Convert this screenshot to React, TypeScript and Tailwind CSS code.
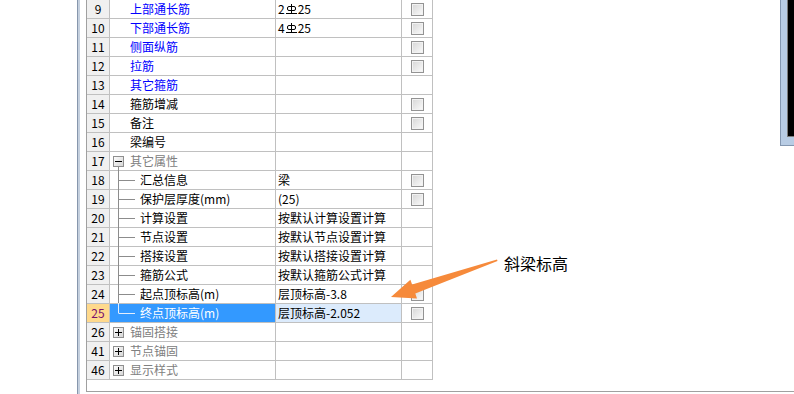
import React from 'react'

type Kind = 'plain' | 'open' | 'child' | 'last' | 'closed'

type Row = {
  n: string
  name: string
  kind: Kind
  blue?: boolean
  value?: React.ReactNode
  check?: boolean
  selected?: boolean
}

// rebar grade symbol (HRB400)
function Rebar() {
  return (
    <svg width="11" height="12" viewBox="0 0 11 12" className="mx-px inline-block">
      <rect x="1.5" y="3.5" width="8" height="4" rx="1.5" fill="none" stroke="#000" />
      <path d="M5.5 1v9.5M0 10.5h11" stroke="#000" />
    </svg>
  )
}

const rows: Row[] = [
  { n: '9', name: '上部通长筋', kind: 'plain', blue: true, value: <>2<Rebar />25</>, check: true },
  { n: '10', name: '下部通长筋', kind: 'plain', blue: true, value: <>4<Rebar />25</>, check: true },
  { n: '11', name: '侧面纵筋', kind: 'plain', blue: true, check: true },
  { n: '12', name: '拉筋', kind: 'plain', blue: true, check: true },
  { n: '13', name: '其它箍筋', kind: 'plain', blue: true },
  { n: '14', name: '箍筋增减', kind: 'plain', check: true },
  { n: '15', name: '备注', kind: 'plain', check: true },
  { n: '16', name: '梁编号', kind: 'plain' },
  { n: '17', name: '其它属性', kind: 'open' },
  { n: '18', name: '汇总信息', kind: 'child', value: '梁', check: true },
  { n: '19', name: '保护层厚度(mm)', kind: 'child', value: '(25)', check: true },
  { n: '20', name: '计算设置', kind: 'child', value: '按默认计算设置计算' },
  { n: '21', name: '节点设置', kind: 'child', value: '按默认节点设置计算' },
  { n: '22', name: '搭接设置', kind: 'child', value: '按默认搭接设置计算' },
  { n: '23', name: '箍筋公式', kind: 'child', value: '按默认箍筋公式计算' },
  { n: '24', name: '起点顶标高(m)', kind: 'child', value: '层顶标高-3.8', check: true },
  { n: '25', name: '终点顶标高(m)', kind: 'last', value: '层顶标高-2.052', check: true, selected: true },
  { n: '26', name: '锚固搭接', kind: 'closed' },
  { n: '41', name: '节点锚固', kind: 'closed' },
  { n: '46', name: '显示样式', kind: 'closed' },
]

function Tree({ kind, light }: { kind: Kind; light?: boolean }) {
  const c = light ? '#e4eefc' : '#8c8c8c'
  if (kind === 'child' || kind === 'last') {
    return (
      <svg width="30" height="18" className="shrink-0 overflow-visible">
        <path d={kind === 'child' ? 'M8.5 -1V18' : 'M8.5 -1V9.5'} stroke={c} />
        <path d="M9 9.5H25" stroke={c} />
      </svg>
    )
  }
  return (
    <svg width="20" height="18" className="shrink-0 overflow-visible">
      <defs>
        <linearGradient id="bx" x1="0" y1="0" x2="1" y2="1">
          <stop offset="0" stopColor="#ffffff" />
          <stop offset="1" stopColor="#d4d4d4" />
        </linearGradient>
      </defs>
      <rect x="3.5" y="4.5" width="10" height="10" fill="url(#bx)" stroke="#8f8f8f" />
      <path d="M5 9.5h7" stroke="#000" />
      {kind === 'closed' && <path d="M8.5 6v7" stroke="#000" />}
      {kind === 'open' && <path d="M8.5 15V18" stroke="#8c8c8c" />}
    </svg>
  )
}

function Check() {
  return (
    <span className="block h-[13px] w-[13px] border border-[#939393] bg-linear-to-br from-[#d6d6d6] to-[#fbfbfb] shadow-[inset_0_0_0_1px_#f2f2f2]" />
  )
}

export default function App() {
  return (
    <div className="relative flex h-[394px] w-[794px] overflow-hidden bg-white font-['Noto_Sans_CJK_SC','Noto_Sans',sans-serif] text-[12px] leading-[18px] text-black">
      <div className="w-[77px] shrink-0" />
      {/* splitter */}
      <div className="w-[3px] shrink-0 border-l border-[#8797ad] bg-[#c5d0de]" />
      <div className="w-[6px] shrink-0" />

      {/* frame */}
      <div className="flex h-[392px] flex-1 border-b border-l border-[#a0a0a0]">
        <div className="grid w-[346px] shrink-0 auto-rows-[19px] grid-cols-[23px_166px_126px_31px] self-start">
          {rows.map((r) => {
            const muted = r.kind === 'open' || r.kind === 'closed'
            return (
              <React.Fragment key={r.n}>
                <div
                  className={
                    'flex items-center justify-center border-r border-b border-[#c0c0c0] ' +
                    (r.selected ? 'bg-[#ffd98c] text-[#7a106c]' : 'bg-[#f0f0f0]')
                  }
                >
                  {r.n}
                </div>
                <div
                  className={
                    'flex items-center border-r border-b border-[#c0c0c0] whitespace-nowrap ' +
                    (r.kind === 'plain' ? 'pl-[20px] ' : '') +
                    (r.selected
                      ? 'bg-[#3399ff] text-white'
                      : r.blue
                        ? 'text-[#0000ff]'
                        : muted
                          ? 'text-[#808080]'
                          : '')
                  }
                >
                  {r.kind !== 'plain' && <Tree kind={r.kind} light={r.selected} />}
                  {r.name}
                </div>
                <div
                  className={
                    'flex items-center border-r border-b border-[#c0c0c0] pl-[2px] whitespace-nowrap ' +
                    (r.selected ? 'bg-[#dcebfc]' : '')
                  }
                >
                  {r.value}
                </div>
                <div className="flex items-center justify-center border-r border-b border-[#c0c0c0]">
                  {r.check && <Check />}
                </div>
              </React.Fragment>
            )
          })}
        </div>

        <div className="flex-1" />

        {/* right side panel */}
        <div className="h-[146px] w-[14px] shrink-0 border-b border-l border-[#8497b0] bg-[#b8cce4] pl-[6px]">
          <div className="h-[137px] border-b border-l border-[#7c7c7c] bg-black" />
        </div>
      </div>

      {/* annotation */}
      <svg width="794" height="394" className="pointer-events-none absolute top-0 left-0">
        <polygon
          points="497,259.5 412.1,284.6 410.4,279.7 391,297 417,298.5 415.3,293.4 497.5,261"
          fill="#f68a3b"
        />
      </svg>
      <div className="absolute top-[255px] left-[504px] text-[16px] leading-[16px]">斜梁标高</div>
    </div>
  )
}
